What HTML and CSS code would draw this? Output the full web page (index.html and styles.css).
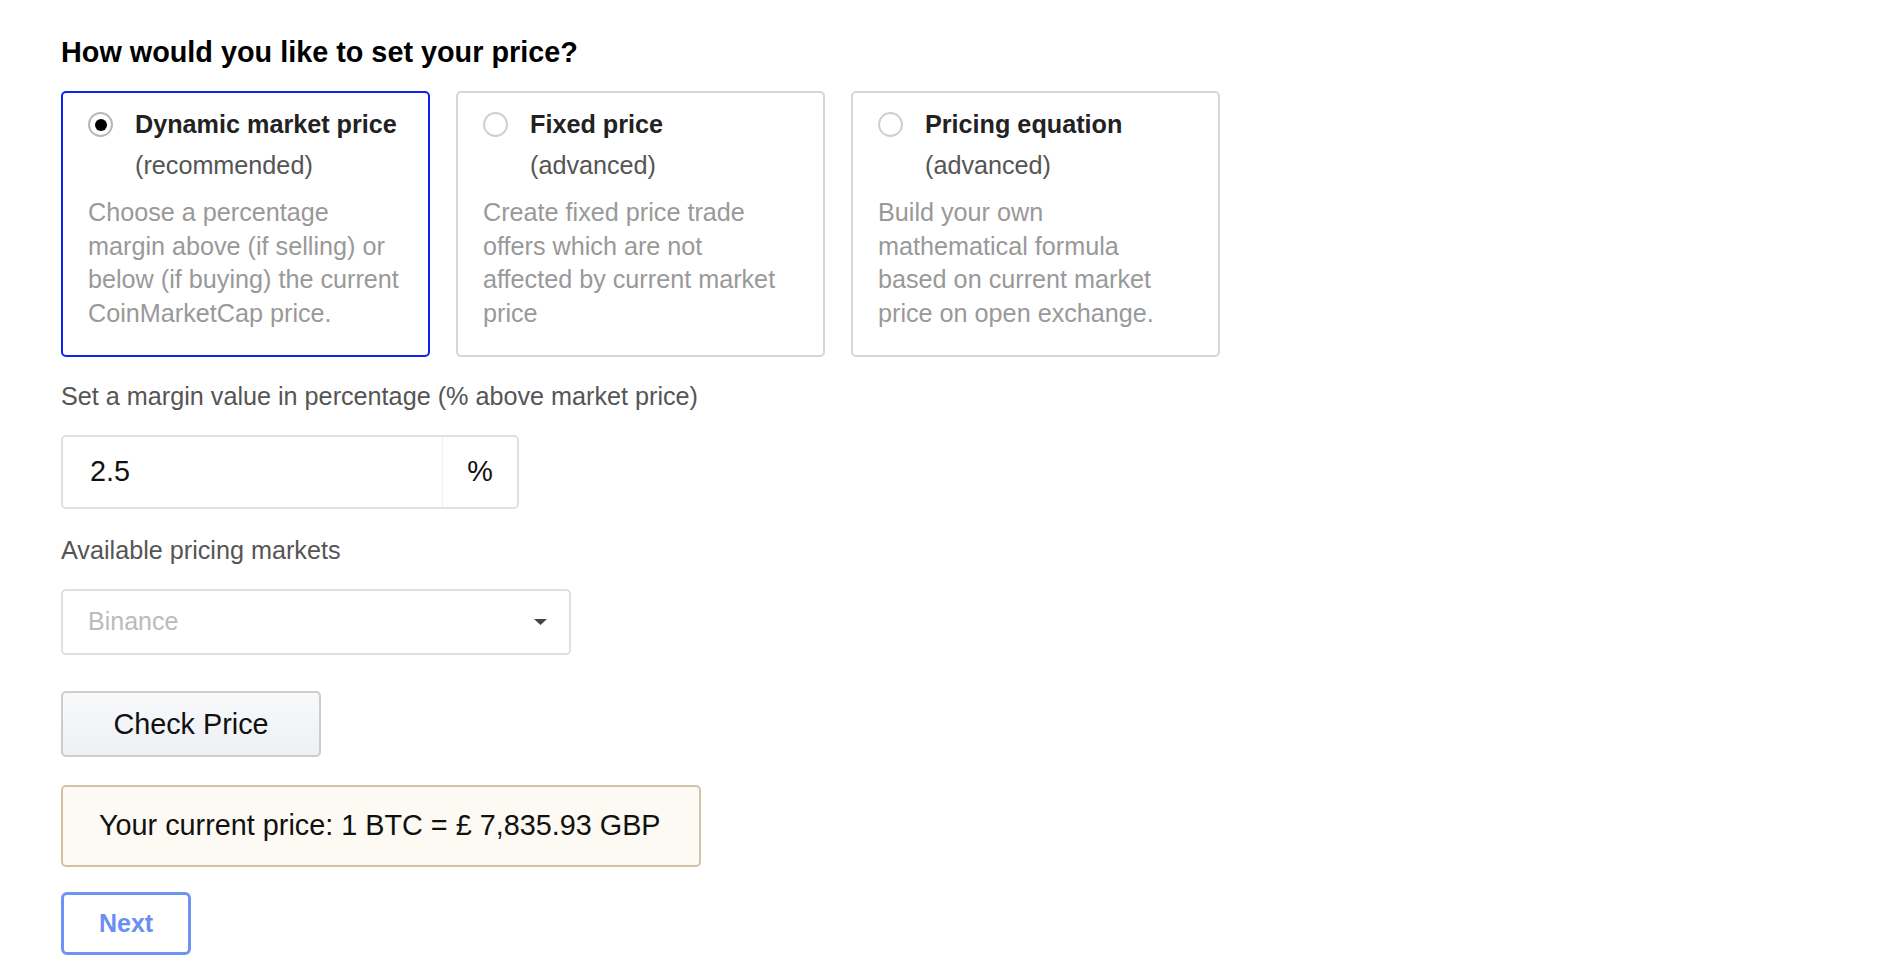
FILE: index.html
```html
<!DOCTYPE html>
<html lang="en">
<head>
<meta charset="utf-8">
<title>Set your price</title>
<link rel="stylesheet" href="styles.css">
</head>
<body>
<main class="page">
  <h1 class="heading">How would you like to set your price?</h1>

  <div class="options">
    <div class="option option--active">
      <div class="option-head">
        <span class="radio radio--checked"></span>
        <div class="option-titles">
          <div class="option-title">Dynamic market price</div>
          <div class="option-sub">(recommended)</div>
        </div>
      </div>
      <p class="option-desc">Choose a percentage margin above (if selling) or below (if buying) the current CoinMarketCap price.</p>
    </div>
    <div class="option">
      <div class="option-head">
        <span class="radio"></span>
        <div class="option-titles">
          <div class="option-title">Fixed price</div>
          <div class="option-sub">(advanced)</div>
        </div>
      </div>
      <p class="option-desc">Create fixed price trade offers which are not affected by current market price</p>
    </div>
    <div class="option">
      <div class="option-head">
        <span class="radio"></span>
        <div class="option-titles">
          <div class="option-title">Pricing equation</div>
          <div class="option-sub">(advanced)</div>
        </div>
      </div>
      <p class="option-desc">Build your own mathematical formula based on current market price on open exchange.</p>
    </div>
  </div>

  <label class="field-label field-label--margin">Set a margin value in percentage (% above market price)</label>
  <div class="input-group">
    <span class="input-value">2.5</span>
    <span class="input-addon">%</span>
  </div>

  <label class="field-label field-label--markets">Available pricing markets</label>
  <div class="select">
    <span class="select-placeholder">Binance</span>
    <svg class="select-arrow" width="13" height="6" viewBox="0 0 13 6"><path d="M0 0 H13 L6.5 6 Z" fill="#444"/></svg>
  </div>

  <button class="btn-check">Check Price</button>

  <div class="price-box">Your current price: 1 BTC = £ 7,835.93 GBP</div>

  <button class="btn-next">Next</button>
</main>
</body>
</html>
```

FILE: styles.css
```css
* { box-sizing: border-box; }

html, body {
  margin: 0;
  padding: 0;
  background: #ffffff;
}

body {
  font-family: "Liberation Sans", Arial, Helvetica, sans-serif;
  font-size: 25.2px;
  line-height: 33.6px;
  color: #222;
}

.page {
  padding: 32px 0 0 61px;
  display: flex;
  flex-direction: column;
  align-items: flex-start;
}

.heading {
  margin: 0;
  font-size: 28.8px;
  line-height: 40px;
  font-weight: 700;
  color: #000;
}

.options {
  margin-top: 19px;
  display: flex;
  gap: 26px;
}

.option {
  width: 369px;
  height: 266px;
  border: 2px solid #d6d6d6;
  border-radius: 5px;
  padding: 15px 26px 0 25px;
  background: #fff;
}

.option--active {
  border-color: #0b22f5;
}

.option-head {
  display: flex;
  align-items: flex-start;
  gap: 22px;
}

.radio {
  flex: none;
  width: 25px;
  height: 25px;
  margin-top: 4px;
  border: 2px solid #cfcfcf;
  border-radius: 50%;
  display: flex;
  align-items: center;
  justify-content: center;
  background: #fff;
}

.radio--checked {
  border-color: #b8b8b8;
}

.radio--checked::after {
  content: "";
  width: 12px;
  height: 12px;
  border-radius: 50%;
  background: #000;
}

.option-title {
  font-weight: 700;
  color: #222;
  margin-bottom: 7px;
}

.option-sub {
  color: #555;
}

.option-desc {
  margin: 14px 0 0;
  color: #999;
}

.field-label {
  display: block;
  color: #555;
}

.field-label--margin {
  margin-top: 23px;
}

.field-label--markets {
  margin-top: 25px;
}

.input-group {
  margin-top: 21px;
  width: 458px;
  height: 74px;
  border: 2px solid #e0e0e0;
  border-radius: 5px;
  display: flex;
  align-items: stretch;
}

.input-value {
  flex: 1;
  display: flex;
  align-items: center;
  padding-left: 27px;
  font-size: 28.8px;
  color: #111;
  border-right: 1px solid #f0f0f0;
}

.input-addon {
  width: 74px;
  display: flex;
  align-items: center;
  justify-content: center;
  font-size: 28.8px;
  color: #111;
}

.select {
  margin-top: 22px;
  width: 510px;
  height: 66px;
  border: 2px solid #e0e0e0;
  border-radius: 5px;
  display: flex;
  align-items: center;
  justify-content: space-between;
  padding: 0 22px 0 25px;
}

.select-placeholder {
  font-size: 25px;
  color: #bbb;
}

.select-arrow {
  display: block;
}

.btn-check {
  margin-top: 36px;
  width: 260px;
  height: 66px;
  border: 2px solid #cdcdcd;
  border-radius: 5px;
  background: linear-gradient(#f8f9fb, #edf0f4);
  font-family: "Liberation Sans", Arial, Helvetica, sans-serif;
  font-size: 28.8px;
  color: #111;
  padding: 0;
  cursor: pointer;
}

.price-box {
  margin-top: 28px;
  width: 640px;
  height: 82px;
  border: 2px solid #d2c3a4;
  border-radius: 5px;
  background: #fdfaf3;
  display: flex;
  align-items: center;
  padding-left: 36px;
  font-size: 28.8px;
  color: #111;
}

.btn-next {
  margin-top: 25px;
  width: 130px;
  height: 63px;
  border: 3px solid #6f93f5;
  border-radius: 6px;
  background: #fff;
  font-family: "Liberation Sans", Arial, Helvetica, sans-serif;
  font-size: 25px;
  font-weight: 700;
  color: #6b8ef3;
  text-align: left;
  padding: 0 0 0 35px;
  cursor: pointer;
}
```
